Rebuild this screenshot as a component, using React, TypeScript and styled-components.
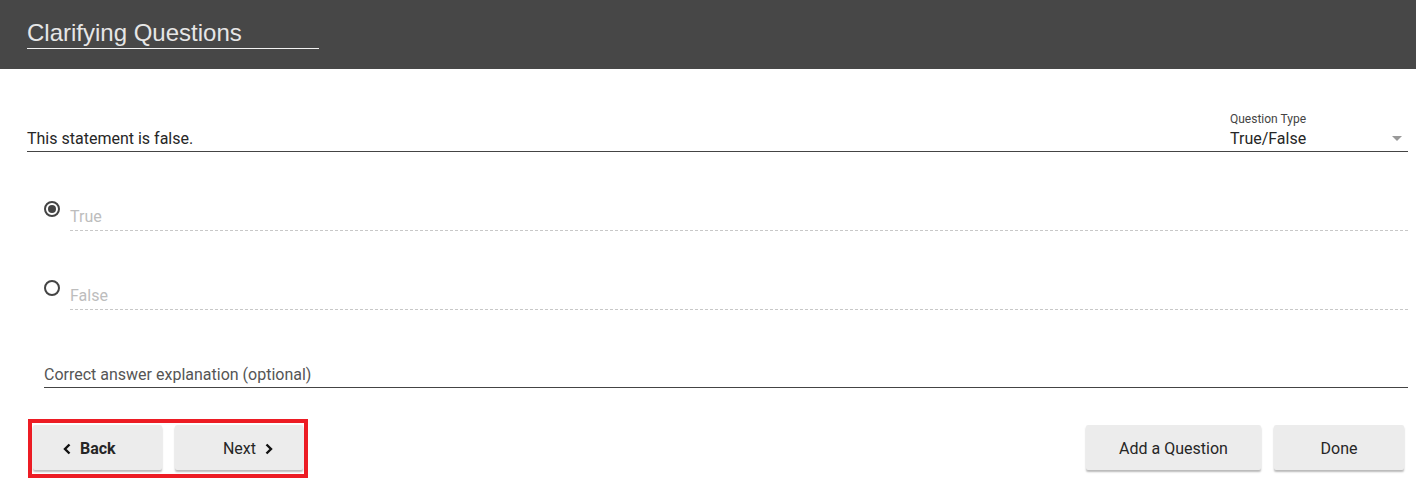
import styled, { createGlobalStyle } from "styled-components";

const Global = createGlobalStyle`
	body {
		margin: 0;
		background: #fff;
		font-family: Roboto, "Liberation Sans", sans-serif;
	}
`;

const Header = styled.header`
	height: 69px;
	background: #474747;
	padding: 20px 0 0 27px;
	box-sizing: border-box;
`;

const Title = styled.div`
	display: inline-block;
	width: 292px;
	font-family: "Liberation Sans", Arial, sans-serif;
	font-size: 24px;
	line-height: 26px;
	color: #e6e6e6;
	border-bottom: 1px solid #f2f2f2;
	padding-bottom: 2px;
`;

const Main = styled.main`
	padding: 0 8px 0 27px;
`;

const QuestionRow = styled.div`
	display: flex;
	align-items: flex-end;
	margin-top: 43px;
	border-bottom: 1px solid #444;
	padding-bottom: 3px;
`;

const QuestionText = styled.div`
	flex: 1;
	font-size: 16px;
	line-height: 19px;
	color: #262626;
`;

const Select = styled.div`
	width: 178px;
	display: flex;
	flex-direction: column;
`;

const SelectLabel = styled.div`
	font-size: 12px;
	line-height: 14px;
	color: #444;
	margin-bottom: 3px;
`;

const SelectValue = styled.div`
	display: flex;
	justify-content: space-between;
	align-items: center;
	font-size: 16px;
	line-height: 19px;
	color: #262626;
`;

const Caret = styled.span`
	width: 0;
	height: 0;
	border-left: 5px solid transparent;
	border-right: 5px solid transparent;
	border-top: 5px solid #999;
	margin-right: 6px;
`;

const Options = styled.div`
	padding-left: 17px;
	margin-top: 49px;
	display: flex;
	flex-direction: column;
	gap: 49px;
`;

const OptionRow = styled.div`
	display: flex;
	align-items: flex-start;
`;

const Radio = styled.span<{ $checked?: boolean }>`
	width: 16px;
	height: 16px;
	border: 2px solid #444;
	border-radius: 50%;
	box-sizing: border-box;
	margin-right: 10px;
	display: flex;
	align-items: center;
	justify-content: center;
	&::after {
		content: "";
		width: 8px;
		height: 8px;
		border-radius: 50%;
		background: ${(p) => (p.$checked ? "#444" : "transparent")};
	}
`;

const OptionField = styled.div`
	flex: 1;
	margin-top: 6px;
	font-size: 16px;
	line-height: 19px;
	color: #bdbdbd;
	padding-bottom: 4px;
	border-bottom: 1px dashed #c8c8c8;
`;

const Explanation = styled.div`
	margin: 55px 0 0 17px;
	font-size: 16px;
	line-height: 19px;
	color: #555;
	padding-bottom: 3px;
	border-bottom: 1px solid #444;
`;

const ButtonBar = styled.div`
	display: flex;
	justify-content: space-between;
	align-items: flex-start;
	margin-top: 31px;
`;

const Highlight = styled.div`
	display: flex;
	gap: 13px;
	border: 4px solid #ed1c24;
	padding: 2px 1px 4px 1px;
	margin-left: 1px;
`;

const Group = styled.div`
	display: flex;
	gap: 13px;
	margin-top: 6px;
	margin-right: 4px;
`;

const Button = styled.button<{ $w: number; $bold?: boolean; $align?: string }>`
	width: ${(p) => p.$w}px;
	height: 45px;
	border: none;
	border-radius: 2px;
	background: #ececec;
	box-shadow: 0 2px 2px rgba(0, 0, 0, 0.28);
	font-family: Roboto, sans-serif;
	font-size: 16px;
	font-weight: ${(p) => (p.$bold ? 700 : 400)};
	color: #262626;
	display: flex;
	align-items: center;
	justify-content: ${(p) => p.$align || "center"};
	gap: 9px;
	padding: 2px 30px 0;
`;

const Chevron = ({ dir }: { dir: "left" | "right" }) => (
	<svg width="8" height="12" viewBox="0 0 8 12">
		<path
			d={dir === "left" ? "M6.5 1.5 L2 6 L6.5 10.5" : "M1.5 1.5 L6 6 L1.5 10.5"}
			fill="none"
			stroke="#111"
			strokeWidth="2.4"
		/>
	</svg>
);

function App() {
	return (
		<>
			<Global />
			<Header>
				<Title>Clarifying Questions</Title>
			</Header>
			<Main>
				<QuestionRow>
					<QuestionText>This statement is false.</QuestionText>
					<Select>
						<SelectLabel>Question Type</SelectLabel>
						<SelectValue>
							True/False
							<Caret />
						</SelectValue>
					</Select>
				</QuestionRow>
				<Options>
					<OptionRow>
						<Radio $checked />
						<OptionField>True</OptionField>
					</OptionRow>
					<OptionRow>
						<Radio />
						<OptionField>False</OptionField>
					</OptionRow>
				</Options>
				<Explanation>Correct answer explanation (optional)</Explanation>
				<ButtonBar>
					<Highlight>
						<Button $w={129} $bold $align="flex-start">
							<Chevron dir="left" />
							Back
						</Button>
						<Button $w={128} $align="flex-end">
							Next
							<Chevron dir="right" />
						</Button>
					</Highlight>
					<Group>
						<Button $w={175}>Add a Question</Button>
						<Button $w={130}>Done</Button>
					</Group>
				</ButtonBar>
			</Main>
		</>
	);
}

export default App;
